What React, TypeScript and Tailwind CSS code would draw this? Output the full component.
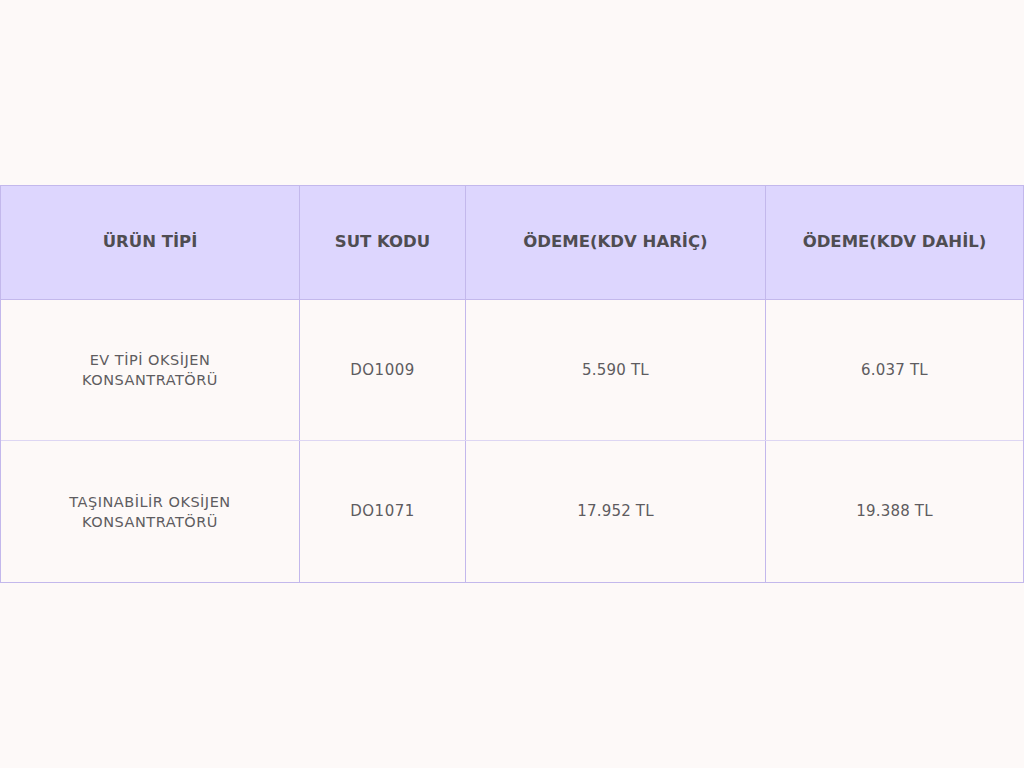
import React from "react";

const rows = [
  { name: ["EV TİPİ OKSİJEN", "KONSANTRATÖRÜ"], code: "DO1009", ex: "5.590 TL", inc: "6.037 TL" },
  { name: ["TAŞINABİLİR OKSİJEN", "KONSANTRATÖRÜ"], code: "DO1071", ex: "17.952 TL", inc: "19.388 TL" },
];

const cols = "grid grid-cols-[299px_166px_300px_1fr]";

export default function App() {
  return (
    <div
      className="min-h-[768px] w-[1024px] bg-[#fdf9f8] pt-[185px]"
      style={{ fontFamily: '"DejaVu Sans", "Open Sans", sans-serif' }}
    >
      <div className="border border-[#c3b8ec]">
        <div className={`${cols} h-[114px] bg-[#ddd6fe] border-b border-[#c3b8ec] text-[16.5px] font-bold text-[#4f4d52]`}>
          <div className="flex items-center justify-center border-r border-[#c3b8ec]">ÜRÜN TİPİ</div>
          <div className="flex items-center justify-center border-r border-[#c3b8ec]">SUT KODU</div>
          <div className="flex items-center justify-center border-r border-[#c3b8ec]">ÖDEME(KDV HARİÇ)</div>
          <div className="flex items-center justify-center">ÖDEME(KDV DAHİL)</div>
        </div>
        {rows.map((r, i) => (
          <div
            key={i}
            className={`${cols} h-[141px] text-[#5e5c60] ${i === 0 ? "border-b border-[#ddd6f3]" : ""}`}
          >
            <div className="flex flex-col items-center justify-center border-r border-[#c3b8ec] text-[14.5px] leading-[20px] tracking-[0.5px]">
              <span>{r.name[0]}</span>
              <span>{r.name[1]}</span>
            </div>
            <div className="flex items-center justify-center border-r border-[#c3b8ec] text-[15px] tracking-[0.5px]">{r.code}</div>
            <div className="flex items-center justify-center border-r border-[#c3b8ec] text-[15px] tracking-[0.2px]">{r.ex}</div>
            <div className="flex items-center justify-center text-[15px] tracking-[0.2px]">{r.inc}</div>
          </div>
        ))}
      </div>
    </div>
  );
}
